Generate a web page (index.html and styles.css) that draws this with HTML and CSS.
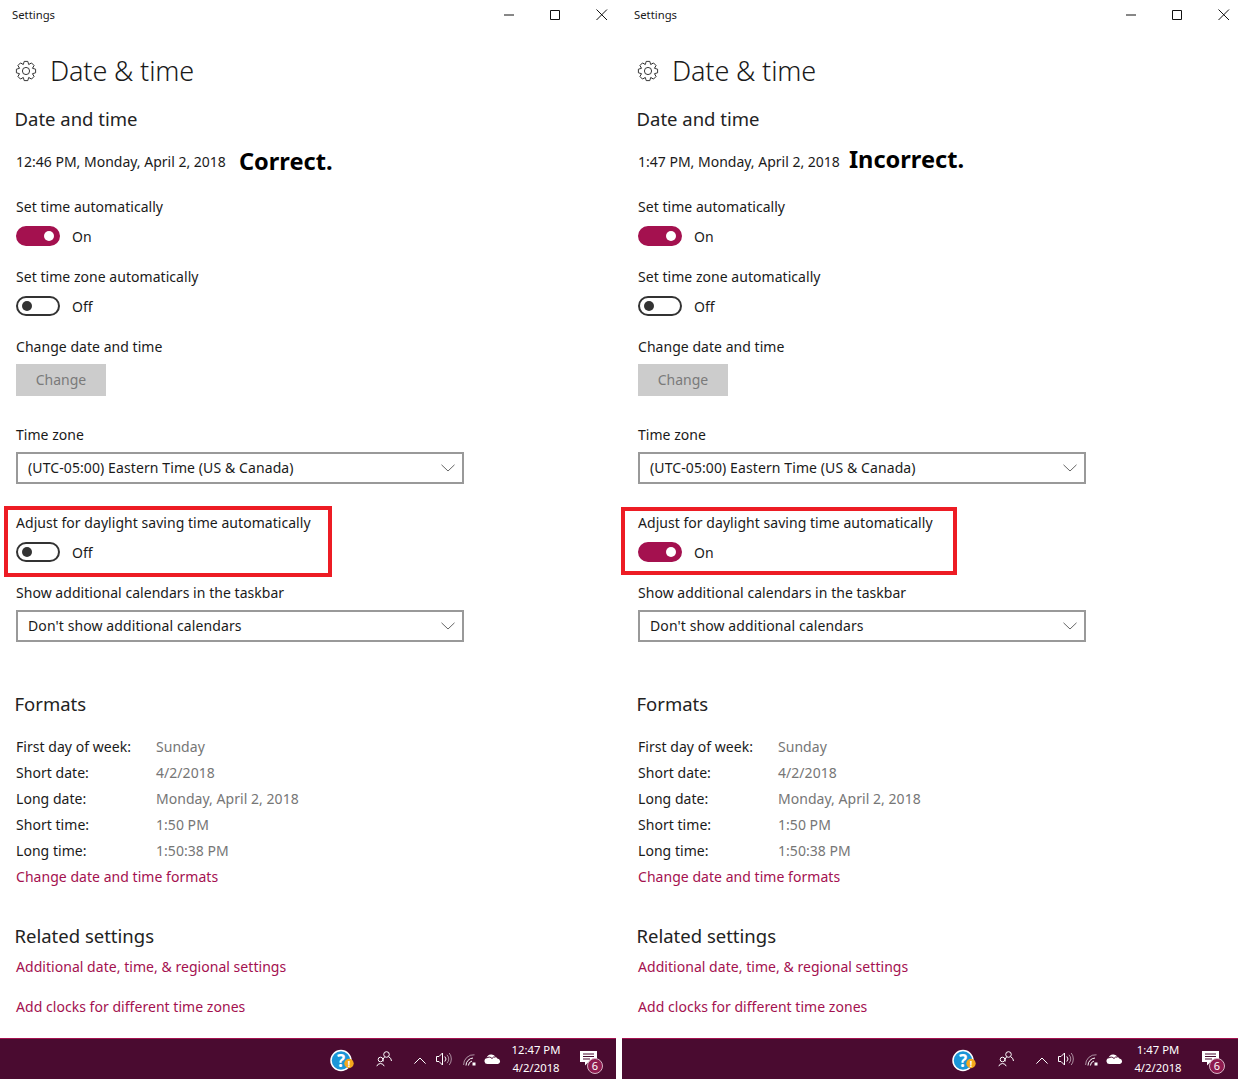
FILE: index.html
```html
<!DOCTYPE html>
<html lang="en">
<head>
<meta charset="utf-8">
<title>Date &amp; time</title>
<link rel="stylesheet" href="styles.css">
</head>
<body>
<svg class="defs" aria-hidden="true">
  <symbol id="gear" viewBox="-11 -11 22 22">
    <g class="line gear-line">
      <path d="M-2.68-6.47-1.8-9.6H1.8L2.68-6.47"/>
      <path d="M-2.68-6.47-1.8-9.6H1.8L2.68-6.47" transform="rotate(45)"/>
      <path d="M-2.68-6.47-1.8-9.6H1.8L2.68-6.47" transform="rotate(90)"/>
      <path d="M-2.68-6.47-1.8-9.6H1.8L2.68-6.47" transform="rotate(135)"/>
      <path d="M-2.68-6.47-1.8-9.6H1.8L2.68-6.47" transform="rotate(180)"/>
      <path d="M-2.68-6.47-1.8-9.6H1.8L2.68-6.47" transform="rotate(225)"/>
      <path d="M-2.68-6.47-1.8-9.6H1.8L2.68-6.47" transform="rotate(270)"/>
      <path d="M-2.68-6.47-1.8-9.6H1.8L2.68-6.47" transform="rotate(315)"/>
      <circle r="3.6"/>
    </g>
  </symbol>
  <symbol id="chev" viewBox="0 0 14 8"><path class="line" d="M.5.8 7 7 13.5.8"/></symbol>
  <symbol id="people" viewBox="0 0 16 16">
    <g class="line">
      <circle cx="10.500" cy="3.500" r="2.800"/>
      <path d="M7.200 10.500a4.300 4.300 0 0 1 1.300-4.500M12.700 5.800a4.800 4.800 0 0 1 2.800 4.200"/>
      <circle cx="4.500" cy="8.500" r="2.300"/>
      <path d="M.8 15.200a3.900 3.900 0 0 1 7.400 0"/>
    </g>
  </symbol>
  <symbol id="up" viewBox="0 0 12 7"><path class="line" d="M.4 6.600 6 1l5.600 5.600"/></symbol>
  <symbol id="speaker" viewBox="0 0 16 14">
    <path class="line" d="M.5 4.500h2.500L6.500 1v12L3 9.500H.5z"/>
    <path class="line" d="M8.800 4.500a3.500 3.500 0 0 1 0 5"/>
    <path class="line dim" d="M11 2.800a6.500 6.500 0 0 1 0 8.400M13.200 1a9.500 9.500 0 0 1 0 12"/>
  </symbol>
  <symbol id="wifi" viewBox="0 0 14 12">
    <path class="line dim" d="M.6 11A10 10 0 0 1 11.500.8"/>
    <path class="line" d="M3 11.500A7.500 7.500 0 0 1 10 4M5.400 11.500A5 5 0 0 1 9 7"/>
    <rect class="fill" x="9.500" y="8.500" width="3" height="3"/>
  </symbol>
  <symbol id="cloud" viewBox="0 0 17 11">
    <path class="fill" d="M3.500 11a3 3 0 0 1-.8-5.900 4.500 4.500 0 0 1 4.800-3.600A4.200 4.200 0 0 1 11.500 4a3.500 3.500 0 0 1 1.800 1.500A2.800 2.800 0 0 1 14 11z"/>
    <path class="cut" d="M2.700 5.100A3.600 3.600 0 0 1 8 5.500a3.200 3.200 0 0 1 3.500-1.500"/>
  </symbol>
  <symbol id="note" viewBox="0 0 18 15">
    <path class="fill" d="M0 0h17v11H8.500L5 14.500V11H0z"/>
    <path class="cut" d="M3 3h11M3 5.500h11M3 8h7"/>
  </symbol>
</svg>

<main class="screens">
  <section class="window">
    <header class="titlebar">
      <span class="app-name">Settings</span>
      <div class="controls">
        <svg class="ctl" viewBox="0 0 12 12"><path class="line" d="M0 6h10"/></svg>
        <svg class="ctl" viewBox="0 0 12 12"><path class="line" d="M.5 1.500h9v9h-9z"/></svg>
        <svg class="ctl" viewBox="0 0 12 12"><path class="line" d="M.5.500l10.500 10.500M11 .5.500 11"/></svg>
      </div>
    </header>
    <div class="page-title"><svg class="gear"><use href="#gear"/></svg><h1>Date &amp; time</h1></div>
    <h2 class="first">Date and time</h2>
    <div class="now"><span>12:46 PM, Monday, April 2, 2018</span><strong class="verdict correct">Correct.</strong></div>
    <div class="label first-label">Set time automatically</div>
    <div class="switch-row"><span class="switch on"></span><span>On</span></div>
    <div class="label">Set time zone automatically</div>
    <div class="switch-row"><span class="switch"></span><span>Off</span></div>
    <div class="label">Change date and time</div>
    <button class="change" type="button">Change</button>
    <div class="label tz-label">Time zone</div>
    <div class="select"><span>(UTC-05:00) Eastern Time (US &amp; Canada)</span><svg class="chev"><use href="#chev"/></svg></div>
    <div class="label dst-label">Adjust for daylight saving time automatically</div>
    <div class="switch-row"><span class="switch"></span><span>Off</span></div>
    <div class="label">Show additional calendars in the taskbar</div>
    <div class="select cal"><span>Don't show additional calendars</span><svg class="chev"><use href="#chev"/></svg></div>
    <h2 class="formats">Formats</h2>
    <dl class="fmt">
      <dt>First day of week:</dt><dd>Sunday</dd>
      <dt>Short date:</dt><dd>4/2/2018</dd>
      <dt>Long date:</dt><dd>Monday, April 2, 2018</dd>
      <dt>Short time:</dt><dd>1:50 PM</dd>
      <dt>Long time:</dt><dd>1:50:38 PM</dd>
    </dl>
    <a class="link" href="#">Change date and time formats</a>
    <h2 class="related">Related settings</h2>
    <a class="link" href="#">Additional date, time, &amp; regional settings</a>
    <a class="link second" href="#">Add clocks for different time zones</a>
    <div class="mark mark-left"></div>
    <footer class="taskbar">
      <svg class="help" viewBox="0 0 26 26"><circle class="ring" cx="12" cy="14.500" r="10"/><text class="q" x="12" y="20.500">?</text><circle class="warn" cx="20" cy="17.500" r="4.700"/><text class="ex" x="20" y="20.800">!</text></svg>
      <svg class="tray people"><use href="#people"/></svg>
      <svg class="tray up"><use href="#up"/></svg>
      <svg class="tray speaker"><use href="#speaker"/></svg>
      <svg class="tray wifi"><use href="#wifi"/></svg>
      <svg class="tray cloud"><use href="#cloud"/></svg>
      <div class="clock"><span>12:47 PM</span><span>4/2/2018</span></div>
      <div class="notes"><svg class="note"><use href="#note"/></svg><span class="badge">6</span></div>
    </footer>
  </section>

  <section class="window">
    <header class="titlebar">
      <span class="app-name">Settings</span>
      <div class="controls">
        <svg class="ctl" viewBox="0 0 12 12"><path class="line" d="M0 6h10"/></svg>
        <svg class="ctl" viewBox="0 0 12 12"><path class="line" d="M.5 1.500h9v9h-9z"/></svg>
        <svg class="ctl" viewBox="0 0 12 12"><path class="line" d="M.5.500l10.500 10.500M11 .5.500 11"/></svg>
      </div>
    </header>
    <div class="page-title"><svg class="gear"><use href="#gear"/></svg><h1>Date &amp; time</h1></div>
    <h2 class="first">Date and time</h2>
    <div class="now"><span>1:47 PM, Monday, April 2, 2018</span><strong class="verdict incorrect">Incorrect.</strong></div>
    <div class="label first-label">Set time automatically</div>
    <div class="switch-row"><span class="switch on"></span><span>On</span></div>
    <div class="label">Set time zone automatically</div>
    <div class="switch-row"><span class="switch"></span><span>Off</span></div>
    <div class="label">Change date and time</div>
    <button class="change" type="button">Change</button>
    <div class="label tz-label">Time zone</div>
    <div class="select"><span>(UTC-05:00) Eastern Time (US &amp; Canada)</span><svg class="chev"><use href="#chev"/></svg></div>
    <div class="label dst-label">Adjust for daylight saving time automatically</div>
    <div class="switch-row"><span class="switch on"></span><span>On</span></div>
    <div class="label">Show additional calendars in the taskbar</div>
    <div class="select cal"><span>Don't show additional calendars</span><svg class="chev"><use href="#chev"/></svg></div>
    <h2 class="formats">Formats</h2>
    <dl class="fmt">
      <dt>First day of week:</dt><dd>Sunday</dd>
      <dt>Short date:</dt><dd>4/2/2018</dd>
      <dt>Long date:</dt><dd>Monday, April 2, 2018</dd>
      <dt>Short time:</dt><dd>1:50 PM</dd>
      <dt>Long time:</dt><dd>1:50:38 PM</dd>
    </dl>
    <a class="link" href="#">Change date and time formats</a>
    <h2 class="related">Related settings</h2>
    <a class="link" href="#">Additional date, time, &amp; regional settings</a>
    <a class="link second" href="#">Add clocks for different time zones</a>
    <div class="mark mark-right"></div>
    <footer class="taskbar">
      <svg class="help" viewBox="0 0 26 26"><circle class="ring" cx="12" cy="14.500" r="10"/><text class="q" x="12" y="20.500">?</text><circle class="warn" cx="20" cy="17.500" r="4.700"/><text class="ex" x="20" y="20.800">!</text></svg>
      <svg class="tray people"><use href="#people"/></svg>
      <svg class="tray up"><use href="#up"/></svg>
      <svg class="tray speaker"><use href="#speaker"/></svg>
      <svg class="tray wifi"><use href="#wifi"/></svg>
      <svg class="tray cloud"><use href="#cloud"/></svg>
      <div class="clock"><span>1:47 PM</span><span>4/2/2018</span></div>
      <div class="notes"><svg class="note"><use href="#note"/></svg><span class="badge">6</span></div>
    </footer>
  </section>
</main>
</body>
</html>
```
FILE: styles.css
```css
* { box-sizing: border-box; }
html, body { margin: 0; padding: 0; background: #fff; }
body {
  width: 1241px;
  height: 1080px;
  overflow: hidden;
  font-family: "Noto Sans", "Open Sans", sans-serif;
  font-size: 14px;
  letter-spacing: .04px;
  color: #1a1a1a;
}
.defs { position: absolute; width: 0; height: 0; }
.line { fill: none; stroke: currentColor; stroke-width: 1; }
.gear-line { stroke-width: .9; }
.dim { opacity: .55; }
.fill { fill: currentColor; }
.cut { fill: none; stroke: #4a0b30; stroke-width: 1; }

.screens { display: grid; grid-template-columns: 616px 616px; column-gap: 6px; }
.window { position: relative; height: 1080px; display: flex; flex-direction: column; padding-left: 16px; }

.titlebar { height: 30px; margin-left: -4px; display: flex; align-items: center; justify-content: space-between; padding-right: 8px; }
.app-name { font-size: 11.300px; letter-spacing: 0; padding-bottom: 2px; }
.controls { display: flex; gap: 34px; color: #111; }
.ctl { width: 12px; height: 12px; display: block; }

.page-title { height: 40px; margin-top: 21px; display: flex; align-items: center; gap: 13px; }
.gear { width: 22px; height: 22px; margin-left: -1px; color: #222; }
h1 { margin: 0; font-size: 27px; font-weight: 300; line-height: 40px; letter-spacing: -.15px; }
h2 { margin: 0 0 0 -1.500px; height: 30px; line-height: 30px; font-size: 18.500px; font-weight: 400; letter-spacing: 0; color: #222; }
h2.first { margin-top: 13px; }
h2.formats { margin-top: 47px; }
h2.related { margin-top: 31px; }

.now { height: 30px; margin-top: 13px; padding-bottom: 2px; display: flex; align-items: center; letter-spacing: 0; }
.verdict { font-weight: 700; font-size: 23.600px; letter-spacing: 0; color: #000; }
.correct { margin-left: 13px; }
.incorrect { margin-left: 9px; margin-bottom: 4px; }

.label { height: 26px; line-height: 26px; margin-top: 18px; }
.first-label { margin-top: 17px; }
.tz-label { margin-top: 26px; }
.dst-label { margin-top: 26px; }

.switch-row { height: 20px; margin-top: 6px; display: flex; align-items: center; gap: 12px; }
.switch { width: 44px; height: 20px; border: 2px solid #333; border-radius: 10px; display: flex; align-items: center; padding: 0 4px; }
.switch::before { content: ""; width: 10px; height: 10px; border-radius: 50%; background: #333; }
.switch.on { background: #a4114f; border-color: #a4114f; justify-content: flex-end; }
.switch.on::before { background: #fff; }

.change { width: 90px; height: 32px; margin-top: 4px; border: 0; padding: 0 0 2px; background: #ccc; color: #7a7a7a; font: inherit; }

.select { width: 448px; height: 32px; margin-top: 4px; border: 2px solid #999; padding: 0 10px 2px; display: flex; align-items: center; justify-content: space-between; letter-spacing: .1px; }
.chev { width: 14px; height: 8px; color: #666; margin-right: -3px; margin-top: 2px; }

.fmt { margin: 15px 0 0; display: grid; grid-template-columns: 140px 1fr; grid-auto-rows: 26px; line-height: 26px; }
.fmt dt { font-weight: 400; }
.fmt dd { margin: 0; color: #767676; }

.link { height: 26px; line-height: 26px; color: #a4114f; text-decoration: none; display: block; }
.second { margin-top: 14px; }
h2.related + .link { margin-top: 3px; }

.mark { position: absolute; border: 4px solid #ed1c24; }
.mark-left { left: 4px; top: 506px; width: 328px; height: 71px; }
.mark-right { left: -1px; top: 507px; width: 336px; height: 68px; }

.taskbar {
  position: absolute; left: 0; right: 0; top: 1038px; height: 41px;
  background: #4a0b30; border-top: 1px solid #a4114f; color: #fff;
  display: flex; align-items: center; padding-right: 12px; justify-content: flex-end;
}
.help { width: 26px; height: 26px; overflow: visible; }
.ring { fill: #1a96d8; stroke: #fff; stroke-width: 1.500; }
.q { fill: #fff; font-size: 17px; font-weight: 700; text-anchor: middle; }
.warn { fill: #f5a81c; }
.ex { fill: #fff; font-size: 9px; font-weight: 700; text-anchor: middle; }
.tray { display: block; }
.people { width: 16px; height: 16px; margin-left: 21px; }
.up { width: 12px; height: 7px; margin-left: 22px; margin-top: 2px; }
.speaker { width: 16px; height: 14px; margin-left: 10px; }
.wifi { width: 14px; height: 12px; margin-left: 11px; margin-top: 2px; }
.cloud { width: 17px; height: 11px; margin-left: 7px; margin-bottom: 2px; }
.clock { width: 60px; margin-left: 5px; font-size: 11.300px; line-height: 18px; letter-spacing: 0; display: flex; flex-direction: column; align-items: center; }
.notes { position: relative; width: 24px; height: 24px; margin-left: 14px; }
.note { width: 18px; height: 15px; display: block; margin-top: 4px; }
.badge { position: absolute; left: 7px; top: 11px; width: 16px; height: 16px; border-radius: 50%; background: #8e1b4f; border: 1px solid #d8b4c6; font-size: 11px; line-height: 14px; text-align: center; }
```
